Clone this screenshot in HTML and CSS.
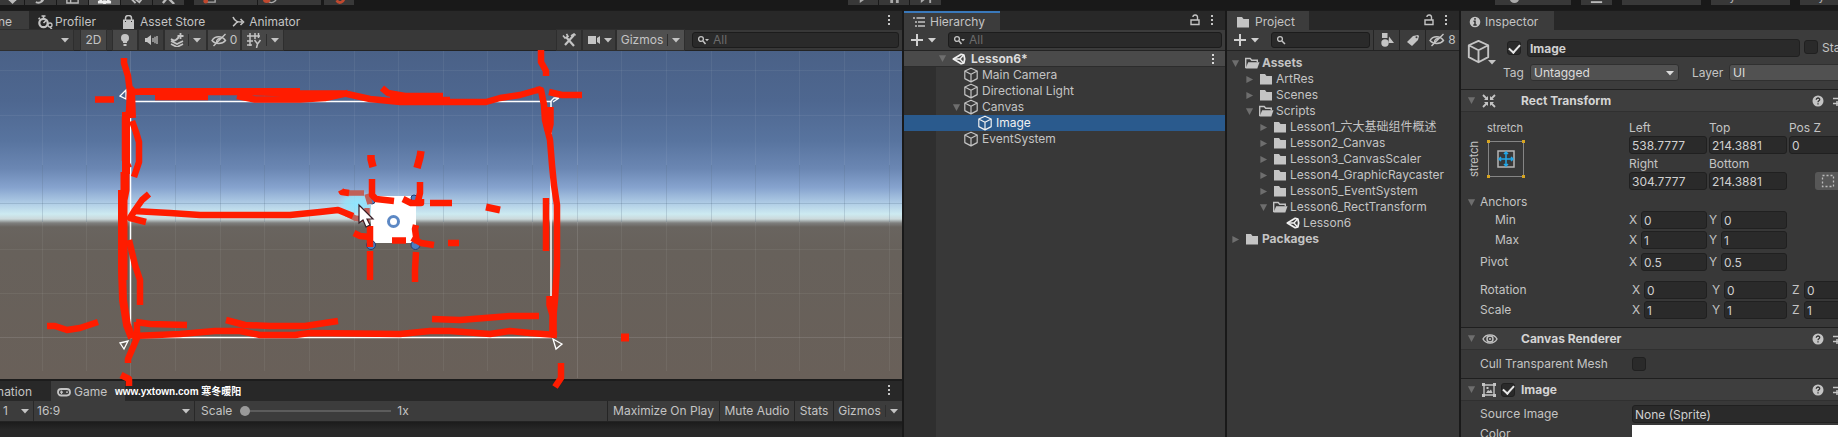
FILE: index.html
```html
<!DOCTYPE html>
<html lang="en">
<head>
<meta charset="utf-8">
<title>Lesson6 - Editor</title>
<link rel="stylesheet" href="styles.css">
</head>
<body>
<svg class="defs" aria-hidden="true">
  <symbol id="cube" viewBox="0 0 16 16"><path d="M8 1.2 14.2 4v7.6L8 14.9 1.8 11.6V4zM1.8 4 8 7.2 14.2 4M8 7.2v7.7" fill="none" stroke="currentColor" stroke-width="1.2" stroke-linejoin="round"/></symbol>
  <symbol id="folder" viewBox="0 0 16 16"><path d="M2 3h5l1.500 2H14v8.500H2z" fill="currentColor"/></symbol>
  <symbol id="folder-open" viewBox="0 0 16 16"><path d="M1.700 13V3.500h4.500l1.500 1.800h5.600v2" fill="none" stroke="currentColor" stroke-width="1.400"/><path d="M4.200 7.300H15.500L13.300 13.600H1.500z" fill="currentColor"/></symbol>
  <symbol id="scene" viewBox="0 0 16 16"><path d="M1.500 8 10.500 2.600 13.600 3.600 14.500 8 13.600 12.400 10.500 13.400z" fill="none" stroke="currentColor" stroke-width="2" stroke-linejoin="round"/><path d="M1.500 8H9M9 8l4.300-4.600M9 8l4.300 4.600" stroke="currentColor" stroke-width="1.600"/></symbol>
  <symbol id="down" viewBox="0 0 10 10"><path d="M0 2.500h10L5 8z" fill="currentColor"/></symbol>
  <symbol id="fold-open" viewBox="0 0 10 10"><path d="M1 1.500h8L5 9z" fill="currentColor"/></symbol>
  <symbol id="fold-shut" viewBox="0 0 10 10"><path d="M1.500 1v8L9 5z" fill="currentColor"/></symbol>
  <symbol id="dots" viewBox="0 0 4 12"><path d="M1 1h2v2H1zM1 5h2v2H1zM1 9h2v2H1z" fill="currentColor"/></symbol>
  <symbol id="lock" viewBox="0 0 12 12"><path d="M2 6h8v4.500H2zM8.500 6V3.500a2.300 2.300 0 0 0-4.600-.5" fill="none" stroke="currentColor" stroke-width="1.400"/></symbol>
  <symbol id="plus" viewBox="0 0 12 12"><path d="M6 0v12M0 6h12" stroke="currentColor" stroke-width="2"/></symbol>
  <symbol id="search" viewBox="0 0 12 10"><circle cx="4" cy="4" r="2.400" fill="none" stroke="currentColor" stroke-width="1.300"/><path d="m6 6 3 3" stroke="currentColor" stroke-width="1.500"/></symbol>
  <symbol id="search-menu" viewBox="0 0 12 10"><circle cx="4" cy="4" r="2.400" fill="none" stroke="currentColor" stroke-width="1.300"/><path d="m6 6 2.500 3" stroke="currentColor" stroke-width="1.500"/><path d="M8 4h4l-2 2.200z" fill="currentColor"/></symbol>
  <symbol id="eye-off" viewBox="0 0 16 14"><path d="M1 7.500C4 2.500 11 2.500 14.500 7.500 11 11.500 4.500 11.500 1 7.500z" fill="none" stroke="currentColor" stroke-width="1.400"/><path d="M5.500 9.500c0-3 2-4.200 4-4M14.500 1 2.500 13" fill="none" stroke="currentColor" stroke-width="1.400"/></symbol>
  <symbol id="help" viewBox="0 0 12 12"><circle cx="6" cy="6" r="5.500" fill="currentColor"/><path d="M4.300 4.700c0-2.300 3.600-2.200 3.400 0C7.600 5.900 6 5.800 6 7.200M6 8.200v1.400" fill="none" stroke="#333" stroke-width="1.300"/></symbol>
  <symbol id="preset" viewBox="0 0 14 12"><path d="M0 3.500h14M0 8.500h14M8 1v5M4 6v5" stroke="currentColor" stroke-width="1.500"/></symbol>
</svg>

<header class="topbar">
  <div class="group"><button aria-label="Hand"><svg viewBox="0 0 16 16"><path d="M4 8v4l4 4 4-4V8z" fill="#bbb"/></svg></button><button class="w32" aria-label="Move"><svg viewBox="0 0 16 16"><path d="M3 14c5 2 9-1 9-8M8 12l6-5" fill="none" stroke="#bbb" stroke-width="2"/></svg></button><button class="w32" aria-label="Scale"><svg viewBox="0 0 16 16"><path d="M2 4h12v11H2zM6 10v5" fill="none" stroke="#bbb" stroke-width="1.500"/></svg></button><button class="w32 lit" aria-label="Rect"><svg viewBox="0 0 16 16"><path d="M1 14h14M4 8v6M12 8v6M8 12v4" stroke="#eee" stroke-width="3"/></svg></button><button class="w32" aria-label="Transform"><svg viewBox="0 0 16 16"><path d="m3 11 4 4M7 11l4 3 4-5" fill="none" stroke="#bbb" stroke-width="2"/></svg></button><button class="w32" aria-label="Custom"><svg viewBox="0 0 16 16"><path d="m2 15 5-6 7 7" fill="none" stroke="#bbb" stroke-width="2.500"/></svg></button></div>
  <div class="group"><button class="w64"><svg viewBox="0 0 16 16"><path d="M4 8v6h10V6" fill="none" stroke="#aaa" stroke-width="1.500"/><circle cx="4" cy="13" r="2.500" fill="#c0492f"/></svg>Pivot</button><button class="w64"><svg viewBox="0 0 16 16"><circle cx="10" cy="9" r="5.500" fill="none" stroke="#aaa" stroke-width="1.500"/><circle cx="5" cy="11" r="4" fill="#c0492f"/></svg>Global</button></div>
  <div class="group snap"><button class="w28" aria-label="Snap"><svg viewBox="0 0 16 16"><path d="M5 12c2 4 8 3 8-4" fill="none" stroke="#c0492f" stroke-width="3"/></svg></button></div>
  <div class="group play"><button class="w28" aria-label="Play"><svg viewBox="0 0 16 16"><path d="M4 2v13l9-6.500z" fill="#aaa"/></svg></button><button class="w28" aria-label="Pause"><svg viewBox="0 0 16 16"><path d="M5 3v12M11 3v12" stroke="#aaa" stroke-width="3"/></svg></button><button class="w32" aria-label="Step"><svg viewBox="0 0 16 16"><path d="M3 2v13l8-6.500zM12 2h2v13h-2z" fill="#aaa"/></svg></button></div>
  <div class="group right"><button class="w76"><svg viewBox="0 0 16 16"><circle cx="9" cy="10" r="5" fill="#aaa"/></svg>Collab</button><button class="w31" aria-label="Services"><svg viewBox="0 0 16 16"><path d="M2 14h12" stroke="#bbb" stroke-width="2"/></svg></button><button class="w78 start">Account</button><button class="w78 start">Layers</button><button class="w62 start">Layout</button></div>
</header>

<main class="workspace">
  <section class="viewport">
    <div class="tabs">
      <div class="tab active cut scene-tab">Scene</div>
      <div class="tab profiler"><svg class="ic16" viewBox="0 0 16 16"><circle cx="6.500" cy="9" r="4.200" fill="none" stroke="currentColor" stroke-width="2.200"/><path d="M4.500 2h4M6.500 2v3M6.500 9l3-3M1.500 5 3 4" stroke="currentColor" stroke-width="1.600"/><circle cx="13" cy="11" r="2" fill="#282828" stroke="currentColor" stroke-width="1.300"/><path d="m13 13 2 2.500" stroke="currentColor" stroke-width="1.300"/></svg>Profiler</div>
      <div class="tab store"><svg class="ic14" viewBox="0 0 14 14"><path d="M2 4.500h11V14H2z" fill="currentColor"/><path d="M4.500 6V3a3 2.500 0 0 1 6 0v3" fill="none" stroke="currentColor" stroke-width="1.500"/><path d="M4.500 6v1M10.500 6v1" stroke="#282828"/></svg>Asset Store</div>
      <div class="tab animator"><svg class="ic14" viewBox="0 0 14 14"><path d="M2 2c2 5 5 5 9 5M2 11c2-1 2.500-3.500 5-4M9.500 4l3 3-3 3" fill="none" stroke="currentColor" stroke-width="1.600"/></svg>Animator</div>
      <button class="kebab" aria-label="Scene menu"><svg><use href="#dots"/></svg></button>
    </div>
    <div class="toolbar scene-tools">
      <button class="tb mode" aria-label="Shading mode"><svg class="dn"><use href="#down"/></svg></button>
      <button class="tb lit two-d">2D</button>
      <button class="tb lit w25" aria-label="Lighting"><svg class="ic14" viewBox="0 0 14 14"><circle cx="7" cy="5" r="4" fill="currentColor"/><path d="M5 7h4v3H5zM5.500 11h3v2h-3z" fill="currentColor"/></svg></button>
      <button class="tb w25" aria-label="Audio"><svg class="ic14" viewBox="0 0 14 14"><path d="M1 5h2l4-3v10L3 9H1z" fill="currentColor"/><path d="M9 5v4M11 3.800v6.400M13 3v8" stroke="currentColor" stroke-width="1.200"/></svg></button>
      <button class="tb lit w41" aria-label="Effects"><svg class="ic14" viewBox="0 0 14 14"><path d="m1 8 6 3 6-3M1 11l6 3 6-3M1 6c3 2 4 2 6 0l2-2" fill="none" stroke="currentColor" stroke-width="1.800"/><path d="M10.500 0v6M7.500 3h6" stroke="currentColor" stroke-width="1.800"/></svg><span class="sep"></span><svg class="dn"><use href="#down"/></svg></button>
      <button class="tb lit w33"><svg class="ic16"><use href="#eye-off"/></svg>0</button>
      <button class="tb lit w41" aria-label="Grid"><svg class="ic16" viewBox="0 0 16 16"><path d="M4 1v13M9 1v6M1 4h13M1 9h6M12.500 1v5M1 13h5M8.500 8l3 4 3-4M11.500 12l-1 4" fill="none" stroke="currentColor" stroke-width="1.500"/></svg><span class="sep"></span><svg class="dn"><use href="#down"/></svg></button>
      <span class="grow"></span>
      <button class="tb w25" aria-label="Tools"><svg class="ic14" viewBox="0 0 14 14"><path d="m4 4 8 9M12 2 3 12" stroke="currentColor" stroke-width="2.200"/><path d="M1 2.500 3 5l3-1.500L4.500.800M9 3l3-2 1.500 1.500" fill="none" stroke="currentColor" stroke-width="1.600"/></svg></button>
      <button class="tb w33" aria-label="Camera"><svg class="ic14" viewBox="0 0 14 14"><path d="M1 3h8v8H1zM10 5l3-2v8l-3-2z" fill="currentColor"/></svg><svg class="dn"><use href="#down"/></svg></button>
      <button class="tb hot w67">Gizmos<span class="sep"></span><svg class="dn"><use href="#down"/></svg></button>
      <label class="find scene-find"><svg><use href="#search-menu"/></svg><input type="text" placeholder="All" aria-label="Search scene"></label>
    </div>
    <div class="world" role="img" aria-label="Scene view"></div>
    <div class="tabs lower">
      <div class="tab cut anim-tab">Animation</div>
      <div class="tab active game-tab"><svg class="ic14" viewBox="0 0 14 14"><rect x="1" y="4" width="12" height="6.500" rx="3.200" fill="none" stroke="currentColor" stroke-width="1.800"/><path d="M4.500 5.500v3.500M3 7.200h3M9 7.200h2" stroke="currentColor" stroke-width="1.200"/></svg>Game</div>
      <button class="kebab" aria-label="Game menu"><svg><use href="#dots"/></svg></button>
    </div>
    <div class="toolbar game-tools">
      <div class="pick display"><select aria-label="Display"><option>1</option></select><svg class="dn"><use href="#down"/></svg></div>
      <div class="pick aspect"><select aria-label="Aspect"><option>16:9</option></select><svg class="dn"><use href="#down"/></svg></div>
      <label class="zoom">Scale<input type="range" min="1" max="5" value="1"></label><output>1x</output>
      <span class="grow"></span>
      <button class="tb edge w111">Maximize On Play</button>
      <button class="tb edge w74">Mute Audio</button>
      <button class="tb edge w38">Stats</button>
      <button class="tb edge w69">Gizmos<span class="sep"></span><svg class="dn"><use href="#down"/></svg></button>
    </div>
    <div class="game"></div>
    <svg class="sketch" viewBox="0 10 902 427" preserveAspectRatio="xMinYMin meet" aria-hidden="true">
      <defs><radialGradient id="glow"><stop offset="0" stop-color="#8fe6ff"/><stop offset=".6" stop-color="#98e2f8" stop-opacity=".8"/><stop offset="1" stop-color="#a8dcf5" stop-opacity="0"/></radialGradient></defs>
      <g stroke="#fff" stroke-opacity=".06"><path d="M42.500 51V371M86.500 51V371M130.500 51V378M175.500 51V371M220.500 51V371M264.500 51V371M309.500 51V371M354.500 51V371M398.500 51V371M443.500 51V371M487.500 51V371M532.500 51V371M577.500 51V378M621.500 51V371M666.500 51V371M711.500 51V371M755.500 51V371M799.500 51V371M844.500 51V371M889.500 51V371M0 70.500H902M0 115.500H902M0 249.500H902M0 293.500H902M0 337.500H902"/><path d="M577.500 51V378M130.500 51V378M0 337.500H902"/></g>
      <g stroke="#30506c" stroke-opacity=".18"><path d="M42.500 165V222M86.500 165V222M175.500 165V222M220.500 165V222M264.500 165V222M309.500 165V222M354.500 165V222M443.500 165V222M487.500 165V222M532.500 165V222M577.500 165V222M621.500 165V222M666.500 165V222M711.500 165V222M755.500 165V222M799.500 165V222M844.500 165V222M889.500 165V222M0 203.500H902"/></g>
      <path d="M130.500 101.500H551V337.500H130.500z" fill="none" stroke="#fff" stroke-width="1.500"/>
      <path d="m120 96 6-6v9zM120 343l8-2-4 8zM553 339l9 5-6 5zM551 101l3-3 5 0M553 102l6-4" fill="none" stroke="#fff" stroke-width="1.300"/>
      <ellipse cx="357" cy="204" rx="20" ry="13" fill="url(#glow)"/>
      <path d="M371 196h45v47h-45z" fill="#fff"/>
      <circle cx="393.500" cy="221.500" r="5" fill="#fff" stroke="#5c88c4" stroke-width="3"/>
      <g fill="#4b7ec2" stroke="#273c70"><circle cx="371" cy="245" r="4.500"/><circle cx="415.500" cy="245" r="4.500"/><circle cx="372" cy="201" r="3"/><circle cx="414" cy="198" r="3"/></g>
      <g fill="none" stroke="#c06058" stroke-width="5.500"><path d="M347 193h17M367 194l3 10M345 213l10 5 12 2v-12"/></g>
      <g fill="none" stroke="#ff1c00" stroke-width="6.500" stroke-linejoin="round">
        <path d="M124 58V63L128 76 130 92 129 112 125 118V160L129 168"/><path d="M127 90 131 90 132 118" stroke-width="8"/><path d="M126 112V174" stroke-width="8"/><path d="M132 121 136 132 139 142V162L134 177"/>
        <path d="M125 172V190L123 200V280" stroke-width="9"/><path d="M122 190V268L123 300 127 325 132 338" stroke-width="8"/>
        <path d="M129 240 135 265 140 280V305M137 322V338L128 359V363M121 375 129 379V386M47 326H55L67 330 80 328 98 322M95 99.500H114"/>
        <path d="M130 92 150 91.500 245 92 300 93.500H345L370 99 400 102H486L500 98 520 95 541 89M155 97H208M237 96 255 99.500H300L325 98 348 93M382 88 388 93 405 96H443M390 100H450"/>
        <path d="M140 90.500H300" stroke-width="5"/>
        <path d="M149 194 142 200 135 210 130 218 146 222M133 211 170 213 200 215H290L320 212 338 210 353 216M341 190 342 192 349 193"/>
        <path d="M371 155V159L373 167M421 151 420 157 417 168" stroke-width="7.500"/>
        <path d="M372 179V195L376 199 394 201M420 182V193L418 201M403 199 411 203H421V199M430 203H452M354 233 360 236 370 237M370 226V247M416 225 415 229 417 243M412 238 421 243 434 245M448 243H459M392 240.500H406M370 251V280M416 252 415 270V282"/>
        <path d="M486 207 500 210" stroke-width="7"/>
        <path d="M541 50V62L546 71V76M536 90H541L544 105 545 120 550 140 552 165 554 185 557 205V265L555 300 553 320V334M549 92 562 95H582M546 198V251"/>
        <path d="M546 110 548 130M550 107V124L548 132M550 296V305L553 315V334" stroke-width="7.500"/>
        <path d="M132 336 180 334 215 331 240 331 260 335H295L310 333 400 334 430 331H450L490 334 510 331 530 333 557 335M136 322 150 324 187 325M226 320 245 325 270 326H305L338 321M432 319 460 320 510 316H539M561 363V378L555 387"/>
        <path d="M621 337.500H629" stroke-width="8"/>
      </g>
      <path d="M359 205V223l4-3 3 7 4-2-3-6h6z" fill="#fff" stroke="#371c24" stroke-width="1.200"/>
    </svg>
    <span class="mark">www.yxtown.com 寒冬暖阳</span>
  </section>

  <section class="panel hierarchy">
    <div class="tabs">
      <div class="tab active focus hier-tab"><svg class="ic14" viewBox="0 0 14 14"><path d="M1 3h2M4.500 3H13M3 7h2M6 7h7M3 11h2M6 11h7" stroke="currentColor" stroke-width="1.500"/></svg>Hierarchy</div>
      <span class="grow"></span><button class="kebab lockb" aria-label="Lock"><svg class="ic12"><use href="#lock"/></svg></button><button class="kebab" aria-label="Hierarchy menu"><svg><use href="#dots"/></svg></button>
    </div>
    <div class="toolbar"><button class="add" aria-label="Create"><svg class="ic12"><use href="#plus"/></svg><svg class="dn"><use href="#down"/></svg></button><label class="find"><svg><use href="#search-menu"/></svg><input type="text" placeholder="All" aria-label="Search hierarchy"></label></div>
    <ul class="tree objects">
      <li class="root"><button class="fold" aria-label="Toggle"><svg><use href="#fold-open"/></svg></button><svg class="ic14 white"><use href="#scene"/></svg>Lesson6*<button class="kebab" aria-label="Scene options"><svg><use href="#dots"/></svg></button></li>
      <li class="d1"><svg class="ic16"><use href="#cube"/></svg>Main Camera</li>
      <li class="d1"><svg class="ic16"><use href="#cube"/></svg>Directional Light</li>
      <li class="d1 parent"><button class="fold" aria-label="Toggle"><svg><use href="#fold-open"/></svg></button><svg class="ic16"><use href="#cube"/></svg>Canvas</li>
      <li class="d2 selected"><svg class="ic16"><use href="#cube"/></svg>Image</li>
      <li class="d1"><svg class="ic16"><use href="#cube"/></svg>EventSystem</li>
    </ul>
  </section>

  <section class="panel project">
    <div class="tabs">
      <div class="tab active proj-tab"><svg class="ic16"><use href="#folder"/></svg>Project</div>
      <span class="grow"></span><button class="kebab lockb" aria-label="Lock"><svg class="ic12"><use href="#lock"/></svg></button><button class="kebab" aria-label="Project menu"><svg><use href="#dots"/></svg></button>
    </div>
    <div class="toolbar"><button class="add" aria-label="Create"><svg class="ic12"><use href="#plus"/></svg><svg class="dn"><use href="#down"/></svg></button><label class="find"><svg><use href="#search"/></svg><input type="text" aria-label="Search project"></label>
      <button class="tb edge w26" aria-label="By type"><svg class="ic14" viewBox="0 0 14 14"><path d="M2 0h5.500v5H2zM9 3.500 14 10H8.500z" fill="currentColor"/><circle cx="5" cy="10" r="3.700" fill="currentColor"/></svg></button><button class="tb edge w26" aria-label="By label"><svg class="ic14" viewBox="0 0 14 14"><path d="m1 9 6-6 5-1 1 1-1 4-6 6z" fill="currentColor"/><circle cx="10.500" cy="4.300" r="1" fill="#3c3c3c"/></svg></button><button class="tb edge w34"><svg class="ic16"><use href="#eye-off"/></svg>8</button></div>
    <ul class="tree files">
      <li class="bold"><button class="fold" aria-label="Toggle"><svg><use href="#fold-open"/></svg></button><svg class="ic16"><use href="#folder-open"/></svg>Assets</li>
      <li class="p1"><button class="fold" aria-label="Toggle"><svg><use href="#fold-shut"/></svg></button><svg class="ic16"><use href="#folder"/></svg>ArtRes</li>
      <li class="p1"><button class="fold" aria-label="Toggle"><svg><use href="#fold-shut"/></svg></button><svg class="ic16"><use href="#folder"/></svg>Scenes</li>
      <li class="p1"><button class="fold" aria-label="Toggle"><svg><use href="#fold-open"/></svg></button><svg class="ic16"><use href="#folder-open"/></svg>Scripts</li>
      <li class="p2"><button class="fold" aria-label="Toggle"><svg><use href="#fold-shut"/></svg></button><svg class="ic16"><use href="#folder"/></svg>Lesson1_六大基础组件概述</li>
      <li class="p2"><button class="fold" aria-label="Toggle"><svg><use href="#fold-shut"/></svg></button><svg class="ic16"><use href="#folder"/></svg>Lesson2_Canvas</li>
      <li class="p2"><button class="fold" aria-label="Toggle"><svg><use href="#fold-shut"/></svg></button><svg class="ic16"><use href="#folder"/></svg>Lesson3_CanvasScaler</li>
      <li class="p2"><button class="fold" aria-label="Toggle"><svg><use href="#fold-shut"/></svg></button><svg class="ic16"><use href="#folder"/></svg>Lesson4_GraphicRaycaster</li>
      <li class="p2"><button class="fold" aria-label="Toggle"><svg><use href="#fold-shut"/></svg></button><svg class="ic16"><use href="#folder"/></svg>Lesson5_EventSystem</li>
      <li class="p2"><button class="fold" aria-label="Toggle"><svg><use href="#fold-open"/></svg></button><svg class="ic16"><use href="#folder-open"/></svg>Lesson6_RectTransform</li>
      <li class="p3"><svg class="ic14 white"><use href="#scene"/></svg>Lesson6</li>
      <li class="bold"><button class="fold" aria-label="Toggle"><svg><use href="#fold-shut"/></svg></button><svg class="ic16"><use href="#folder"/></svg>Packages</li>
    </ul>
  </section>

  <section class="panel inspector">
    <div class="tabs"><div class="tab active insp-tab"><svg class="ic12" viewBox="0 0 12 12"><circle cx="6" cy="6" r="5.300" fill="currentColor"/><path d="M6 2v1.800M4.500 5.200H6V9M4.300 9h3.400" fill="none" stroke="#333" stroke-width="1.500"/></svg>Inspector</div></div>
    <div class="object">
      <button class="kind" aria-label="Icon"><svg class="big"><use href="#cube"/></svg><svg class="dn"><use href="#down"/></svg></button>
      <div class="object-rows">
        <div class="name-row"><input type="checkbox" checked aria-label="Active"><input class="field strong" type="text" value="Image" aria-label="Name"><label class="static"><input type="checkbox">Static</label></div>
        <div class="tag-row"><label for="tag">Tag</label><div class="pick drop tag"><select id="tag"><option>Untagged</option></select><svg class="dn"><use href="#down"/></svg></div><label for="layer" class="layer-label">Layer</label><div class="pick drop layer"><select id="layer"><option>UI</option></select></div></div>
      </div>
    </div>

    <div class="comp-head"><button class="fold" aria-label="Toggle"><svg><use href="#fold-open"/></svg></button><svg class="ic14" viewBox="0 0 14 14"><path d="M1 1l4 4M13 1 9 5M1 13l4-4M13 13 9 9" stroke="currentColor" stroke-width="1.800"/><path d="M6 2v4H2zM8 2v4h4zM6 12V8H2zM8 12V8h4z" fill="currentColor"/></svg><h2>Rect Transform</h2><button class="icon help" aria-label="Help"><svg class="ic12"><use href="#help"/></svg></button><svg class="ic14"><use href="#preset"/></svg></div>
    <div class="rect">
      <button class="anchor" aria-label="Anchor preset"><span class="side">stretch</span><span class="anchor-main"><span>stretch</span><svg viewBox="0 0 38 38"><path d="M1.500 1.500h35v35h-35z" fill="none" stroke="#858585"/><path d="M11 11h16v16H11z" fill="none" stroke="#b5b5b5" stroke-width="1.500"/><path d="M12 19h14M19 12v14M14 17l-2 2 2 2M24 17l2 2-2 2M17 14l2-2 2 2M17 24l2 2 2-2" fill="none" stroke="#22a7e8" stroke-width="1.500"/><path d="M0 0h3v3H0zM35 0h3v3h-3zM0 35h3v3H0zM35 35h3v3h-3z" fill="#d7a520"/></svg></span></button>
      <div class="sizes">
        <label>Left<input class="field" type="text" value="538.7777"></label><label>Top<input class="field" type="text" value="214.3881"></label><label>Pos Z<input class="field" type="text" value="0"></label>
        <label>Right<input class="field" type="text" value="304.7777"></label><label>Bottom<input class="field" type="text" value="214.3881"></label><button class="blueprint" aria-label="Blueprint mode"><svg class="ic14" viewBox="0 0 14 14"><path d="M1.500 1.500h11v11h-11z" fill="none" stroke="#bbb" stroke-width="1.300" stroke-dasharray="2 2"/></svg></button>
      </div>
    </div>
    <div class="props">
      <div class="prop anchors"><button class="fold" aria-label="Toggle"><svg><use href="#fold-open"/></svg></button><span>Anchors</span></div>
      <div class="prop sub"><span>Min</span><label>X<input class="field" type="text" value="0"></label><label>Y<input class="field" type="text" value="0"></label></div>
      <div class="prop sub"><span>Max</span><label>X<input class="field" type="text" value="1"></label><label>Y<input class="field" type="text" value="1"></label></div>
      <div class="prop pivot"><span>Pivot</span><label>X<input class="field" type="text" value="0.5"></label><label>Y<input class="field" type="text" value="0.5"></label></div>
      <div class="prop vec rot"><span>Rotation</span><label>X<input class="field" type="text" value="0"></label><label>Y<input class="field" type="text" value="0"></label><label>Z<input class="field" type="text" value="0"></label></div>
      <div class="prop vec"><span>Scale</span><label>X<input class="field" type="text" value="1"></label><label>Y<input class="field" type="text" value="1"></label><label>Z<input class="field" type="text" value="1"></label></div>
    </div>

    <div class="comp-head"><button class="fold" aria-label="Toggle"><svg><use href="#fold-open"/></svg></button><svg class="ic16" viewBox="0 0 16 16"><path d="M1 8C4 2.500 12 2.500 15 8 12 13.500 4 13.500 1 8z" fill="none" stroke="currentColor" stroke-width="1.400"/><circle cx="8" cy="8" r="3" fill="none" stroke="currentColor" stroke-width="1.400"/><circle cx="8" cy="8" r="1" fill="currentColor"/></svg><h2>Canvas Renderer</h2><button class="icon help" aria-label="Help"><svg class="ic12"><use href="#help"/></svg></button><svg class="ic14"><use href="#preset"/></svg></div>
    <div class="cull"><label for="cull">Cull Transparent Mesh</label><input id="cull" type="checkbox"></div>

    <div class="comp-head"><button class="fold" aria-label="Toggle"><svg><use href="#fold-open"/></svg></button><svg class="ic14" viewBox="0 0 14 14"><path d="M2 2h10v10H2z" fill="none" stroke="currentColor" stroke-width="1.400"/><path d="M0 0h3v3H0zM11 0h3v3h-3zM0 11h3v3H0zM11 11h3v3h-3zM4 10l2-3 1.500 1L9 6.500l1.500 3.500zM4.500 4h2v2h-2z" fill="currentColor"/></svg><input type="checkbox" checked aria-label="Image enabled"><h2>Image</h2><button class="icon help" aria-label="Help"><svg class="ic12"><use href="#help"/></svg></button><svg class="ic14"><use href="#preset"/></svg></div>
    <div class="sprite"><label for="src">Source Image</label><input id="src" class="field" type="text" value="None (Sprite)"><span>Color</span><button class="swatch" aria-label="Color"></button></div>
  </section>
</main>
</body>
</html>
```
FILE: styles.css
```css
* { box-sizing: border-box; }
body {
  margin: 0; height: 100vh; overflow: hidden; display: flex; flex-direction: column;
  background: #191919; color: #c4c4c4;
  font: 12px/16px Inter, "Noto Sans CJK SC", sans-serif;
}
button, input, select { font: inherit; color: inherit; margin: 0; padding: 0; border: 0; background: none; min-width: 0; }
svg { display: block; flex: none; }
.defs { position: absolute; width: 0; height: 0; }
.grow { flex: 1; }
.ic12 { width: 12px; height: 12px; }
.ic14 { width: 14px; height: 14px; }
.ic16 { width: 16px; height: 16px; }
.white { color: #f0f0f0; }
.dn { width: 8px; height: 8px; }

.topbar { height: 10px; flex: none; padding-bottom: 5px; overflow: hidden; display: flex; align-items: flex-end; gap: 10px; }
.group { display: flex; gap: 1px; }
.group button { height: 18px; width: 24px; background: #383838; color: #b0b0b0; display: flex; align-items: center; justify-content: center; gap: 4px; }
.group svg { width: 15px; height: 15px; }
.snap { margin-left: -7px; }
.play { margin-left: 34px; }
.group .start { justify-content: flex-start; padding-left: 5px; }
.play { margin-left: 35px; }
.topbar .play { margin-left: 35px; }
.right { margin-left: auto; gap: 10px; margin-right: -34px; }
.group .w28 { width: 30px; } .group .w31 { width: 31px; } .group .w32 { width: 31px; }
.group .w64 { width: 63px; } .group .w76 { width: 76px; } .group .w78 { width: 79px; } .group .w62 { width: 72px; }
.group .lit { background: #5c5c5c; }
.topbar .play { margin-left: 484px; }

.workspace { flex: 1; min-height: 0; display: grid; grid-template-columns: 902fr 321fr 232fr 377fr; gap: 2px; }
.viewport, .panel { position: relative; min-width: 0; min-height: 0; display: flex; flex-direction: column; overflow: hidden; }
.panel { background: #383838; }
.tabs { height: 20px; flex: none; display: flex; background: #282828; border-top: 1px solid #1c1c1c; }
.tab { display: flex; align-items: center; padding: 2px 8px 0; gap: 4px; white-space: nowrap; }
.tab.active { background: #3c3c3c; }
.tab.focus { border-top: 2px solid #3a79bb; padding-top: 0; }
.cut { justify-content: flex-end; overflow: hidden; }
.scene-tab { width: 29px; padding: 2px 17px 0 0; }
.profiler { padding-right: 17px; gap: 2px; }
.store { padding-right: 18px; }
.store svg { margin-right: 1px; }
.hier-tab { width: 96px; } .proj-tab { width: 82px; } .insp-tab { width: 93px; }
.kebab { margin-left: auto; width: 26px; height: 18px; display: flex; align-items: center; justify-content: center; }
.kebab svg { width: 4px; height: 12px; }
.kebab.lockb { width: 16px; margin-left: 0; }
.kebab.lockb svg { width: 12px; }
.lockb + .kebab { margin-left: 0; width: 18px; margin-right: 4px; }

.toolbar { height: 21px; flex: none; display: flex; align-items: stretch; background: #3c3c3c; border-bottom: 1px solid #232323; }
.tb { display: flex; align-items: center; justify-content: center; gap: 3px; white-space: nowrap; flex: none; }
.scene-tools { gap: 2px; background: #383838; }
.scene-tools .tb { background: #3c3c3c; outline: 1px solid #2e2e2e; }
.scene-tools .tb.lit { background: #474747; }
.scene-tools .tb.hot { background: #505050; }
.tb.mode { width: 73px; justify-content: flex-end; padding-right: 4px; }
.tb.two-d { width: 25px; margin: 0 5px 0 6px; }
.sep { width: 1px; height: 12px; background: #2e2e2e; margin: 0 1px; }
.w25 { width: 24px; } .w26 { width: 26px; } .w33 { width: 32px; } .w34 { width: 34px; } .w38 { width: 39px; }
.w41 { width: 41px; } .w67 { width: 67px; } .w69 { width: 69px; } .w74 { width: 75px; } .w111 { width: 112px; }
.edge { border-left: 1px solid #252525; }
.find { flex: 1; min-width: 0; margin: 2px 3px 2px 8px; padding: 0 4px; height: 16px; display: flex; align-items: center; gap: 4px; background: #2a2a2a; border: 1px solid #1c1c1c; border-radius: 3px; }
.find svg { width: 12px; height: 10px; }
.find input { flex: 1; outline: 0; height: 14px; }
.find input::placeholder { color: #6c6c6c; opacity: 1; }
.scene-find { flex: 0 0 207px; margin-left: 6px; }
.add { display: flex; align-items: center; gap: 5px; padding: 0 4px 0 7px; color: #d0d0d0; }

.world { flex: none; height: 328px; background: linear-gradient(#4a6187 0, #4e6790 50px, #58749f 90px, #6b87b3 118px, #87a4cf 137px, #acc9e4 151px, #cdeaf1 163px, #cbd9db 168px, #7f7f7e 172px, #69645f 176px, #67615b 200px, #696059 327px); }
.tabs.lower { height: 22px; border-top: 2px solid #1c1c1c; }
.anim-tab { width: 51px; padding: 2px 19px 0 0; }
.game-tab { width: 74px; padding: 2px 6px 0; gap: 3px; }
.pick { position: relative; display: flex; align-items: center; }
.pick select { appearance: none; width: 100%; height: 100%; padding-left: 3px; outline: 0; }
.pick .dn { position: absolute; right: 4px; pointer-events: none; }
.display { width: 34px; border-right: 1px solid #282828; }
.aspect { width: 161px; border-right: 1px solid #282828; }
.zoom { display: flex; align-items: center; gap: 8px; padding-left: 6px; }
.zoom input { appearance: none; width: 151px; height: 2px; background: #5c5c5c; }
.zoom input::-webkit-slider-thumb { appearance: none; width: 10px; height: 10px; border-radius: 5px; background: #999; }
output { margin-left: 6px; align-self: center; }
.game { flex: 1; background: linear-gradient(#1c1c1c, #282828 8px); }
.sketch { position: absolute; left: 0; top: 0; width: 100%; height: 427px; pointer-events: none; }
.mark { position: absolute; left: 115px; top: 374px; color: #fff; font: bold 10px/16px "Liberation Sans", "Noto Sans CJK SC", sans-serif; }

.tree { list-style: none; margin: 0; padding: 0; white-space: nowrap; }
.tree li { height: 16px; display: flex; align-items: center; }
.fold { width: 14px; height: 16px; display: flex; align-items: center; justify-content: center; color: #6e6e6e; flex: none; }
.fold svg { width: 9px; height: 9px; }
.objects { flex: 1; background: linear-gradient(90deg, #2f2f2f 32px, transparent 32px); }
.objects li { padding-left: 59px; gap: 3px; }
.objects .root { padding-left: 31px; background: #4a4a4a; font-weight: bold; border-bottom: 1px solid #2c2c2c; color: #dcdcdc; }
.root .ic14 { margin-right: 2px; }
.root .kebab { width: 25px; }
.objects .parent { padding-left: 45px; gap: 0; }
.objects .parent .ic16 { margin-right: 3px; }
.objects .d2 { padding-left: 73px; }
.objects .selected { background: #2a5a8d; color: #f0f0f0; }
.files { padding-top: 4px; }
.files li { padding-left: 1px; gap: 2px; }
.files .p1 { padding-left: 15px; }
.files .p2 { padding-left: 29px; }
.files .p3 { padding-left: 59px; gap: 3px; }
.bold { font-weight: bold; }

.inspector > div { min-width: 420px; flex: none; }
.object { display: flex; height: 60px; padding: 9px 0 0 5px; background: #3c3c3c; border-bottom: 1px solid #1f1f1f; }
.kind { width: 30px; align-self: flex-start; position: relative; }
.kind .big { width: 25px; height: 25px; }
.kind .dn { position: absolute; right: 0; top: 19px; }
.object-rows { flex: 1; display: flex; flex-direction: column; gap: 7px; padding-left: 11px; }
.name-row, .tag-row { display: flex; align-items: center; }
.field { background: #2a2a2a; border: 1px solid #202020; border-radius: 3px; height: 18px; padding: 0 2px; width: 100%; color: #d0d0d0; outline: 0; }
.name-row .field { width: 273px; margin: 0 4px 0 6px; }
.strong { font-weight: bold; }
input[type="checkbox"] { appearance: none; width: 14px; height: 14px; flex: none; background: #2a2a2a; border: 1px solid #202020; border-radius: 3px; display: grid; place-items: center; }
input[type="checkbox"]:checked::after { content: ""; width: 9px; height: 5px; border: solid #e6e6e6; border-width: 0 0 2px 2px; transform: translateY(-1px) rotate(-48deg); }
.static { display: flex; gap: 4px; }
.tag-row > label { width: 27px; margin-left: -4px; }
.tag-row > .layer-label { width: 37px; margin-left: 13px; }
.drop { height: 17px; background: #515151; border: 1px solid #303030; border-radius: 3px; color: #dcdcdc; }
.tag { width: 149px; } .layer { width: 140px; }
.comp-head { height: 22px; display: flex; align-items: center; background: #3e3e3e; border-bottom: 1px solid #303030; padding-left: 3px; }
.comp-head .ic14, .comp-head .ic16 { margin-left: 4px; }
.comp-head > svg + h2 { margin-left: 25px; }
.comp-head > .ic16 + h2 { margin-left: 23px; }
.comp-head input { margin-left: 5px; }
.comp-head h2 { margin: 0 0 0 6px; font-size: 12px; line-height: 16px; color: #d4d4d4; flex: 0 0 291px; }
.comp-head .help + .ic14 { margin-left: 9px; }
.rect { display: flex; padding-top: 8px; }
.anchor { width: 168px; display: flex; gap: 6px; padding: 0 0 0 6px; font-size: 11px; align-items: flex-end; height: 58px; }
.anchor .side { writing-mode: vertical-rl; transform: rotate(180deg); width: 14px; height: 38px; line-height: 14px; }
.anchor-main { display: flex; flex-direction: column; align-items: flex-start; gap: 4px; }
.anchor-main svg { width: 38px; height: 38px; }
.sizes { display: grid; grid-template-columns: repeat(3, 78px); column-gap: 2px; row-gap: 2px; }
.sizes label { display: block; height: 34px; }
.sizes .field { display: block; }
.blueprint { width: 26px; height: 18px; margin: 16px 0 0 26px; background: #575757; border-radius: 3px; display: grid; place-items: center; }
.props { padding: 4px 0 6px; border-bottom: 1px solid #1f1f1f; }
.prop { display: grid; grid-template-columns: 147px repeat(3, 78px); column-gap: 2px; align-items: center; padding-left: 19px; height: 18px; margin-bottom: 2px; }
.prop > span { grid-column: 1; }
.prop label { display: grid; grid-template-columns: 12px 1fr; align-items: center; }
.props .anchors { display: flex; padding-left: 3px; gap: 2px; height: 16px; margin-bottom: 1px; }
.sub > span { padding-left: 15px; }
.prop.pivot { margin-top: 4px; }
.prop.rot { margin-top: 10px; }
.vec label { padding-left: 3px; }
.cull { display: flex; align-items: center; padding-left: 19px; height: 29px; border-bottom: 1px solid #1f1f1f; }
.cull label { width: 152px; }
.sprite { display: grid; grid-template-columns: 152px 1fr; padding: 4px 0 0 19px; row-gap: 2px; align-items: center; }
.swatch { height: 18px; background: #fff; }
```
